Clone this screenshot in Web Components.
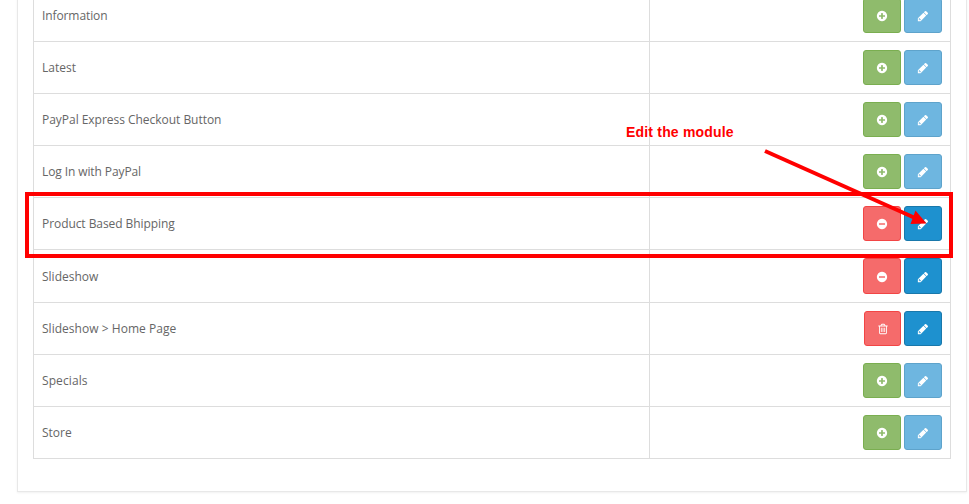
<!DOCTYPE html>
<html lang="en">
<head>
<meta charset="utf-8">
<title>Modules</title>
<style>
html,body{margin:0;height:504px;overflow:hidden;background:#fff}
body{position:relative;font-family:"Open Sans",sans-serif;font-size:12px;color:#666}
</style>
</head>
<body>
<module-panel>
  <module-table>
    <module-row name="Information" kind="add" style="letter-spacing:-.1px"></module-row>
    <module-row name="Latest" kind="add"></module-row>
    <module-row name="PayPal Express Checkout Button" kind="add" style="letter-spacing:-.03px"></module-row>
    <module-row name="Log In with PayPal" kind="add" style="letter-spacing:-.1px"></module-row>
    <module-row name="Product Based Bhipping" kind="remove" style="letter-spacing:-.07px"></module-row>
    <module-row name="Slideshow" kind="remove" tall></module-row>
    <module-row name="Slideshow &gt; Home Page" kind="trash" style="letter-spacing:.03px"></module-row>
    <module-row name="Specials" kind="add" style="letter-spacing:.1px"></module-row>
    <module-row name="Store" kind="add"></module-row>
  </module-table>
</module-panel>
<callout-overlay>Edit the module</callout-overlay>
<script>
const RING = 'm320-64q0 209-103 385.5t-279.5 279.5-385.5 103-385.5-103-279.5-279.5-103-385.5 103-385.5 279.5-279.5 385.5-103 385.5 103 279.5 279.5 103 385.5z';
const ICONS = {
  add: 'M1344 960v-128q0-26-19-45t-45-19h-256v-256q0-26-19-45t-45-19h-128q-26 0-45 19t-19 45v256h-256q-26 0-45 19t-19 45v128q0 26 19 45t45 19h256v256q0 26 19 45t45 19h128q26 0 45-19t19-45v-256h256q26 0 45-19t19-45z' + RING,
  remove: 'M1344 960v-128q0-26-19-45t-45-19h-768q-26 0-45 19t-19 45v128q0 26 19 45t45 19h768q26 0 45-19t19-45z' + RING,
  edit: 'M491 1536l91-91-235-235-91 91v107h128v128h107zM960 416l416 416-832 832h-416v-416zm683 96q0 53-37 90l-166 166-416-416 166-165q36-38 90-38 53 0 91 38l235 234q37 39 37 91z',
  trash: 'M704 736v576q0 14-9 23t-23 9h-64q-14 0-23-9t-9-23v-576q0-14 9-23t23-9h64q14 0 23 9t9 23zm256 0v576q0 14-9 23t-23 9h-64q-14 0-23-9t-9-23v-576q0-14 9-23t23-9h64q14 0 23 9t9 23zm256 0v576q0 14-9 23t-23 9h-64q-14 0-23-9t-9-23v-576q0-14 9-23t23-9h64q14 0 23 9t9 23zm128 724v-948h-896v948q0 22 7 40.5t14.5 27 10.5 8.5h832q3 0 10.5-8.5t14.5-27 7-40.5zm-672-1076h448l-48-117q-7-9-17-11h-317q-10 2-17 11zm928 32v64q0 14-9 23t-23 9h-96v948q0 83-47 143.5t-113 60.5h-832q-66 0-113-58.5t-47-141.5v-952h-96q-14 0-23-9t-9-23v-64q0-14 9-23t23-9h309l70-167q15-37 54-63t79-26h320q40 0 79 26t54 63l70 167h309q14 0 23 9t9 23z'
};

customElements.define('icon-button', class extends HTMLElement {
  constructor() {
    super();
    this.attachShadow({mode: 'open'});
  }
  connectedCallback() {
    this.shadowRoot.innerHTML = `<style>
      :host{display:block;flex:none;width:38px}
      :host([icon=trash]){width:37px}
      button{display:flex;align-items:center;justify-content:center;box-sizing:border-box;width:100%;height:100%;margin:0;padding:1px 0 0;border:1px solid;border-radius:3px;color:#fff}
      :host([icon=add]) button{background:#8fbb6c;border-color:#7aae50}
      :host([icon=remove]) button,:host([icon=trash]) button{background:#f56b6b;border-color:#f24545}
      :host([icon=edit]) button{background:#1e91cf;border-color:#1978ab}
      :host([icon=edit][faded]) button{background:#6eb6e0;border-color:#5ea3cb}
      svg{display:block;width:12px;height:12px;fill:#fff}
    </style><button type="button"><svg viewBox="0 0 1792 1792"><path d="${ICONS[this.getAttribute('icon')]}"/></svg></button>`;
  }
});

customElements.define('module-row', class extends HTMLElement {
  constructor() {
    super();
    this.attachShadow({mode: 'open'});
  }
  connectedCallback() {
    const kind = this.getAttribute('kind');
    this.shadowRoot.innerHTML = `<style>
      :host{display:grid;grid-template-columns:616px 1fr;height:51px;border-bottom:1px solid #ddd}
      :host([tall]){height:52px}
      .name{display:flex;align-items:center;padding:0 8px;border-right:1px solid #ddd;line-height:17px}
      .actions{display:flex;justify-content:flex-end;gap:3px;padding:8px}
    </style><div class="name"><span></span></div>
    <div class="actions"><icon-button icon="${kind}"></icon-button><icon-button icon="edit" ${kind === 'add' ? 'faded' : ''}></icon-button></div>`;
    this.shadowRoot.querySelector('span').textContent = this.getAttribute('name');
  }
});

customElements.define('module-table', class extends HTMLElement {
  constructor() {
    super();
    this.attachShadow({mode: 'open'}).innerHTML = `<style>
      :host{display:block;border:1px solid #ddd;border-width:0 1px}
    </style><slot></slot>`;
  }
});

customElements.define('module-panel', class extends HTMLElement {
  constructor() {
    super();
    this.attachShadow({mode: 'open'}).innerHTML = `<style>
      :host{display:block;box-sizing:border-box;width:950px;height:502px;margin:-10px 0 0 17px;padding:0 15px;border:1px solid #e8e8e8;border-top:0;box-shadow:0 1px 2px rgba(0,0,0,.06)}
    </style><slot></slot>`;
  }
});

customElements.define('callout-overlay', class extends HTMLElement {
  constructor() {
    super();
    this.attachShadow({mode: 'open'}).innerHTML = `<style>
      :host{display:block;position:absolute;inset:0;pointer-events:none;color:#f00}
      .frame{position:absolute;left:25px;top:192px;width:928px;height:66px;box-sizing:border-box;border:4px solid #f00}
      .label{position:absolute;left:626px;top:123px;font:bold 14px/18px "Liberation Sans",Arial,sans-serif;letter-spacing:.19px;white-space:nowrap}
      svg{position:absolute;left:0;top:0}
    </style>
    <div class="frame"></div>
    <div class="label"><slot></slot></div>
    <svg width="969" height="504"><path d="M765 151L914 217.500" stroke="#f00" stroke-width="4"/><path d="M926.500 223.500L910.500 224L915.500 210.500Z" fill="#f00"/></svg>`;
  }
});
</script>
</body>
</html>
